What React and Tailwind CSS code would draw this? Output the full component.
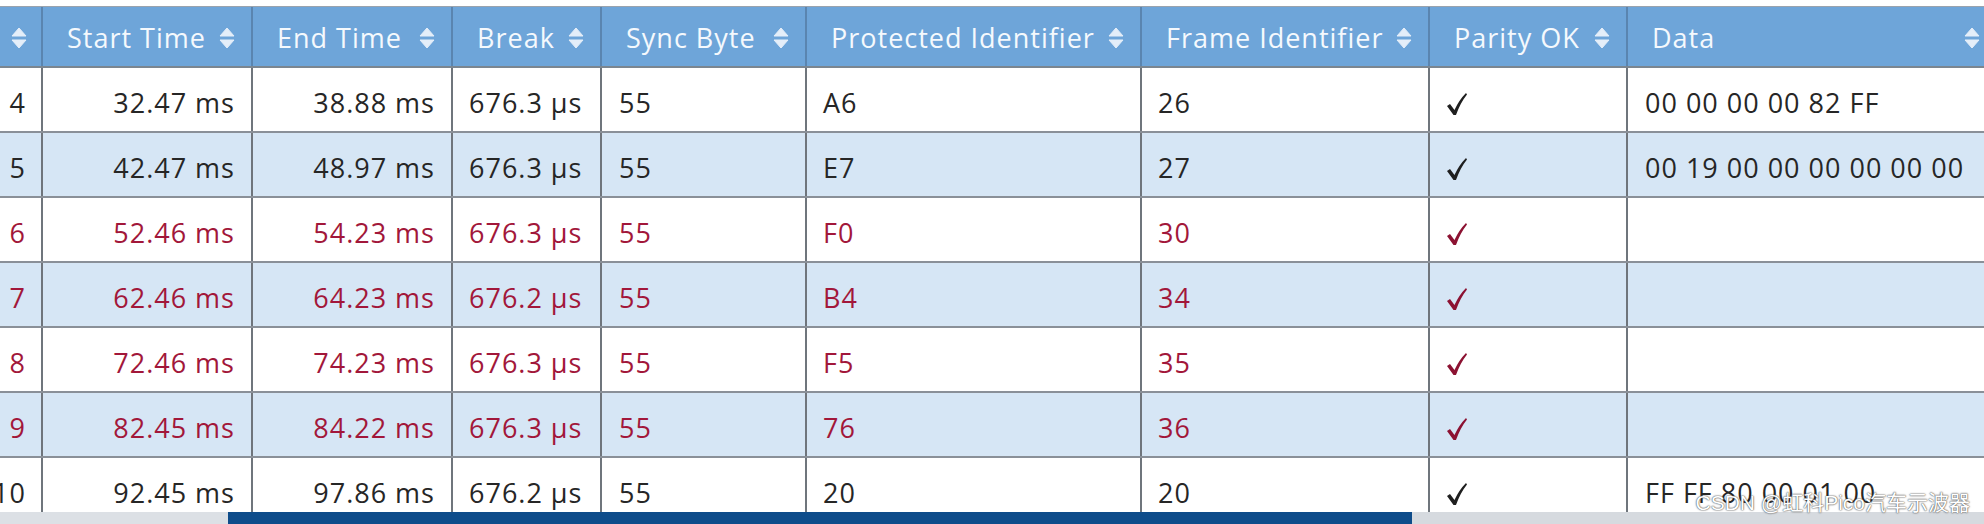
const GRID =
  "grid grid-cols-[43px_210px_200px_149px_205px_335px_288px_198px_356px]";

const headers = [
  "Start Time",
  "End Time",
  "Break",
  "Sync Byte",
  "Protected Identifier",
  "Frame Identifier",
  "Parity OK",
];

const rows = [
  { n: "4", start: "32.47 ms", end: "38.88 ms", brk: "676.3 µs", sync: "55", pid: "A6", fid: "26", data: "00 00 00 00 82 FF", err: false },
  { n: "5", start: "42.47 ms", end: "48.97 ms", brk: "676.3 µs", sync: "55", pid: "E7", fid: "27", data: "00 19 00 00 00 00 00 00", err: false },
  { n: "6", start: "52.46 ms", end: "54.23 ms", brk: "676.3 µs", sync: "55", pid: "F0", fid: "30", data: "", err: true },
  { n: "7", start: "62.46 ms", end: "64.23 ms", brk: "676.2 µs", sync: "55", pid: "B4", fid: "34", data: "", err: true },
  { n: "8", start: "72.46 ms", end: "74.23 ms", brk: "676.3 µs", sync: "55", pid: "F5", fid: "35", data: "", err: true },
  { n: "9", start: "82.45 ms", end: "84.22 ms", brk: "676.3 µs", sync: "55", pid: "76", fid: "36", data: "", err: true },
  { n: "10", start: "92.45 ms", end: "97.86 ms", brk: "676.2 µs", sync: "55", pid: "20", fid: "20", data: "FF FF 80 00 01 00", err: false },
];

function SortIcon() {
  return (
    <svg width="16" height="22" viewBox="0 0 16 22" className="shrink-0">
      <path d="M8 1 L15 9 L1 9 Z" fill="#e4eef9" stroke="#e4eef9" strokeWidth="1" strokeLinejoin="round" />
      <path d="M1 13 L15 13 L8 21 Z" fill="#e4eef9" stroke="#e4eef9" strokeWidth="1" strokeLinejoin="round" />
    </svg>
  );
}

function Check({ red }) {
  return (
    <svg width="22" height="24" viewBox="0 0 22 24">
      <path
        d="M1 14 L4 12 L8.5 18 Q13 8 20 1 L21 2.5 Q14.5 10.5 10 23 L7.5 23 Z"
        fill={red ? "#8c1232" : "#1f1f1f"}
      />
    </svg>
  );
}

function Row({ r, i }) {
  const bg = i % 2 === 0 ? "bg-white" : "bg-[#d6e6f5]";
  const txt = r.err ? "text-[#a2173a]" : "text-[#262626]";
  const cell = "flex items-center pt-[8px] border-r-2 border-[#6f757c] overflow-hidden whitespace-nowrap";
  return (
    <div className={`${GRID} h-[65px] shrink-0 border-b-2 border-[#8a9098] ${bg} ${txt}`}>
      <div className={`${cell} justify-end pr-[15px]`}>{r.n}</div>
      <div className={`${cell} justify-end pr-4`}>{r.start}</div>
      <div className={`${cell} justify-end pr-4`}>{r.end}</div>
      <div className={`${cell} pl-4`}>{r.brk}</div>
      <div className={`${cell} pl-[17px]`}>{r.sync}</div>
      <div className={`${cell} pl-4`}>{r.pid}</div>
      <div className={`${cell} pl-4`}>{r.fid}</div>
      <div className={`${cell} pl-4`}>
        <Check red={r.err} />
      </div>
      <div className="flex items-center pt-[8px] pl-[17px] whitespace-nowrap overflow-hidden">{r.data}</div>
    </div>
  );
}

export default function App() {
  return (
    <div className="relative w-[1984px] h-[524px] overflow-hidden bg-white flex flex-col pt-[6px] font-['Open_Sans',sans-serif] text-[27px] tracking-[1px]">
      <div className={`${GRID} h-[62px] shrink-0 bg-[#6ea5d9] text-[#f5f9fd] border-t border-b-2 border-t-[#9aa3ad] border-b-[#7b8690]`}>
        <div className="flex items-center justify-center pr-1 pt-[3px] border-r-2 border-[#5a85b0]">
          <SortIcon />
        </div>
        {headers.map((h) => (
          <div
            key={h}
            className="flex items-center justify-between pl-6 pr-4 pt-[3px] border-r-2 border-[#5a85b0] whitespace-nowrap"
          >
            <span>{h}</span>
            <SortIcon />
          </div>
        ))}
        <div className="flex items-center justify-between pl-6 pr-1 pt-[3px] whitespace-nowrap">
          <span>Data</span>
          <SortIcon />
        </div>
      </div>

      <div className="flex-1 flex flex-col overflow-hidden">
        {rows.map((r, i) => (
          <Row key={r.n} r={r} i={i} />
        ))}
      </div>

      <div className="h-[12px] shrink-0 flex bg-[#d6dadf]">
        <div className="w-[228px] bg-[#dce0e5]" />
        <div className="w-[1184px] bg-[#0e4c8a]" />
        <div className="flex-1" />
      </div>

      <div className="absolute right-[14px] bottom-[6px] font-['Liberation_Sans','Noto_Sans_CJK_SC',sans-serif] text-[21px] tracking-normal text-white [text-shadow:0_0_2px_#4a4a4a,0_0_1px_#4a4a4a]">
        CSDN @虹科Pico汽车示波器
      </div>
    </div>
  );
}
